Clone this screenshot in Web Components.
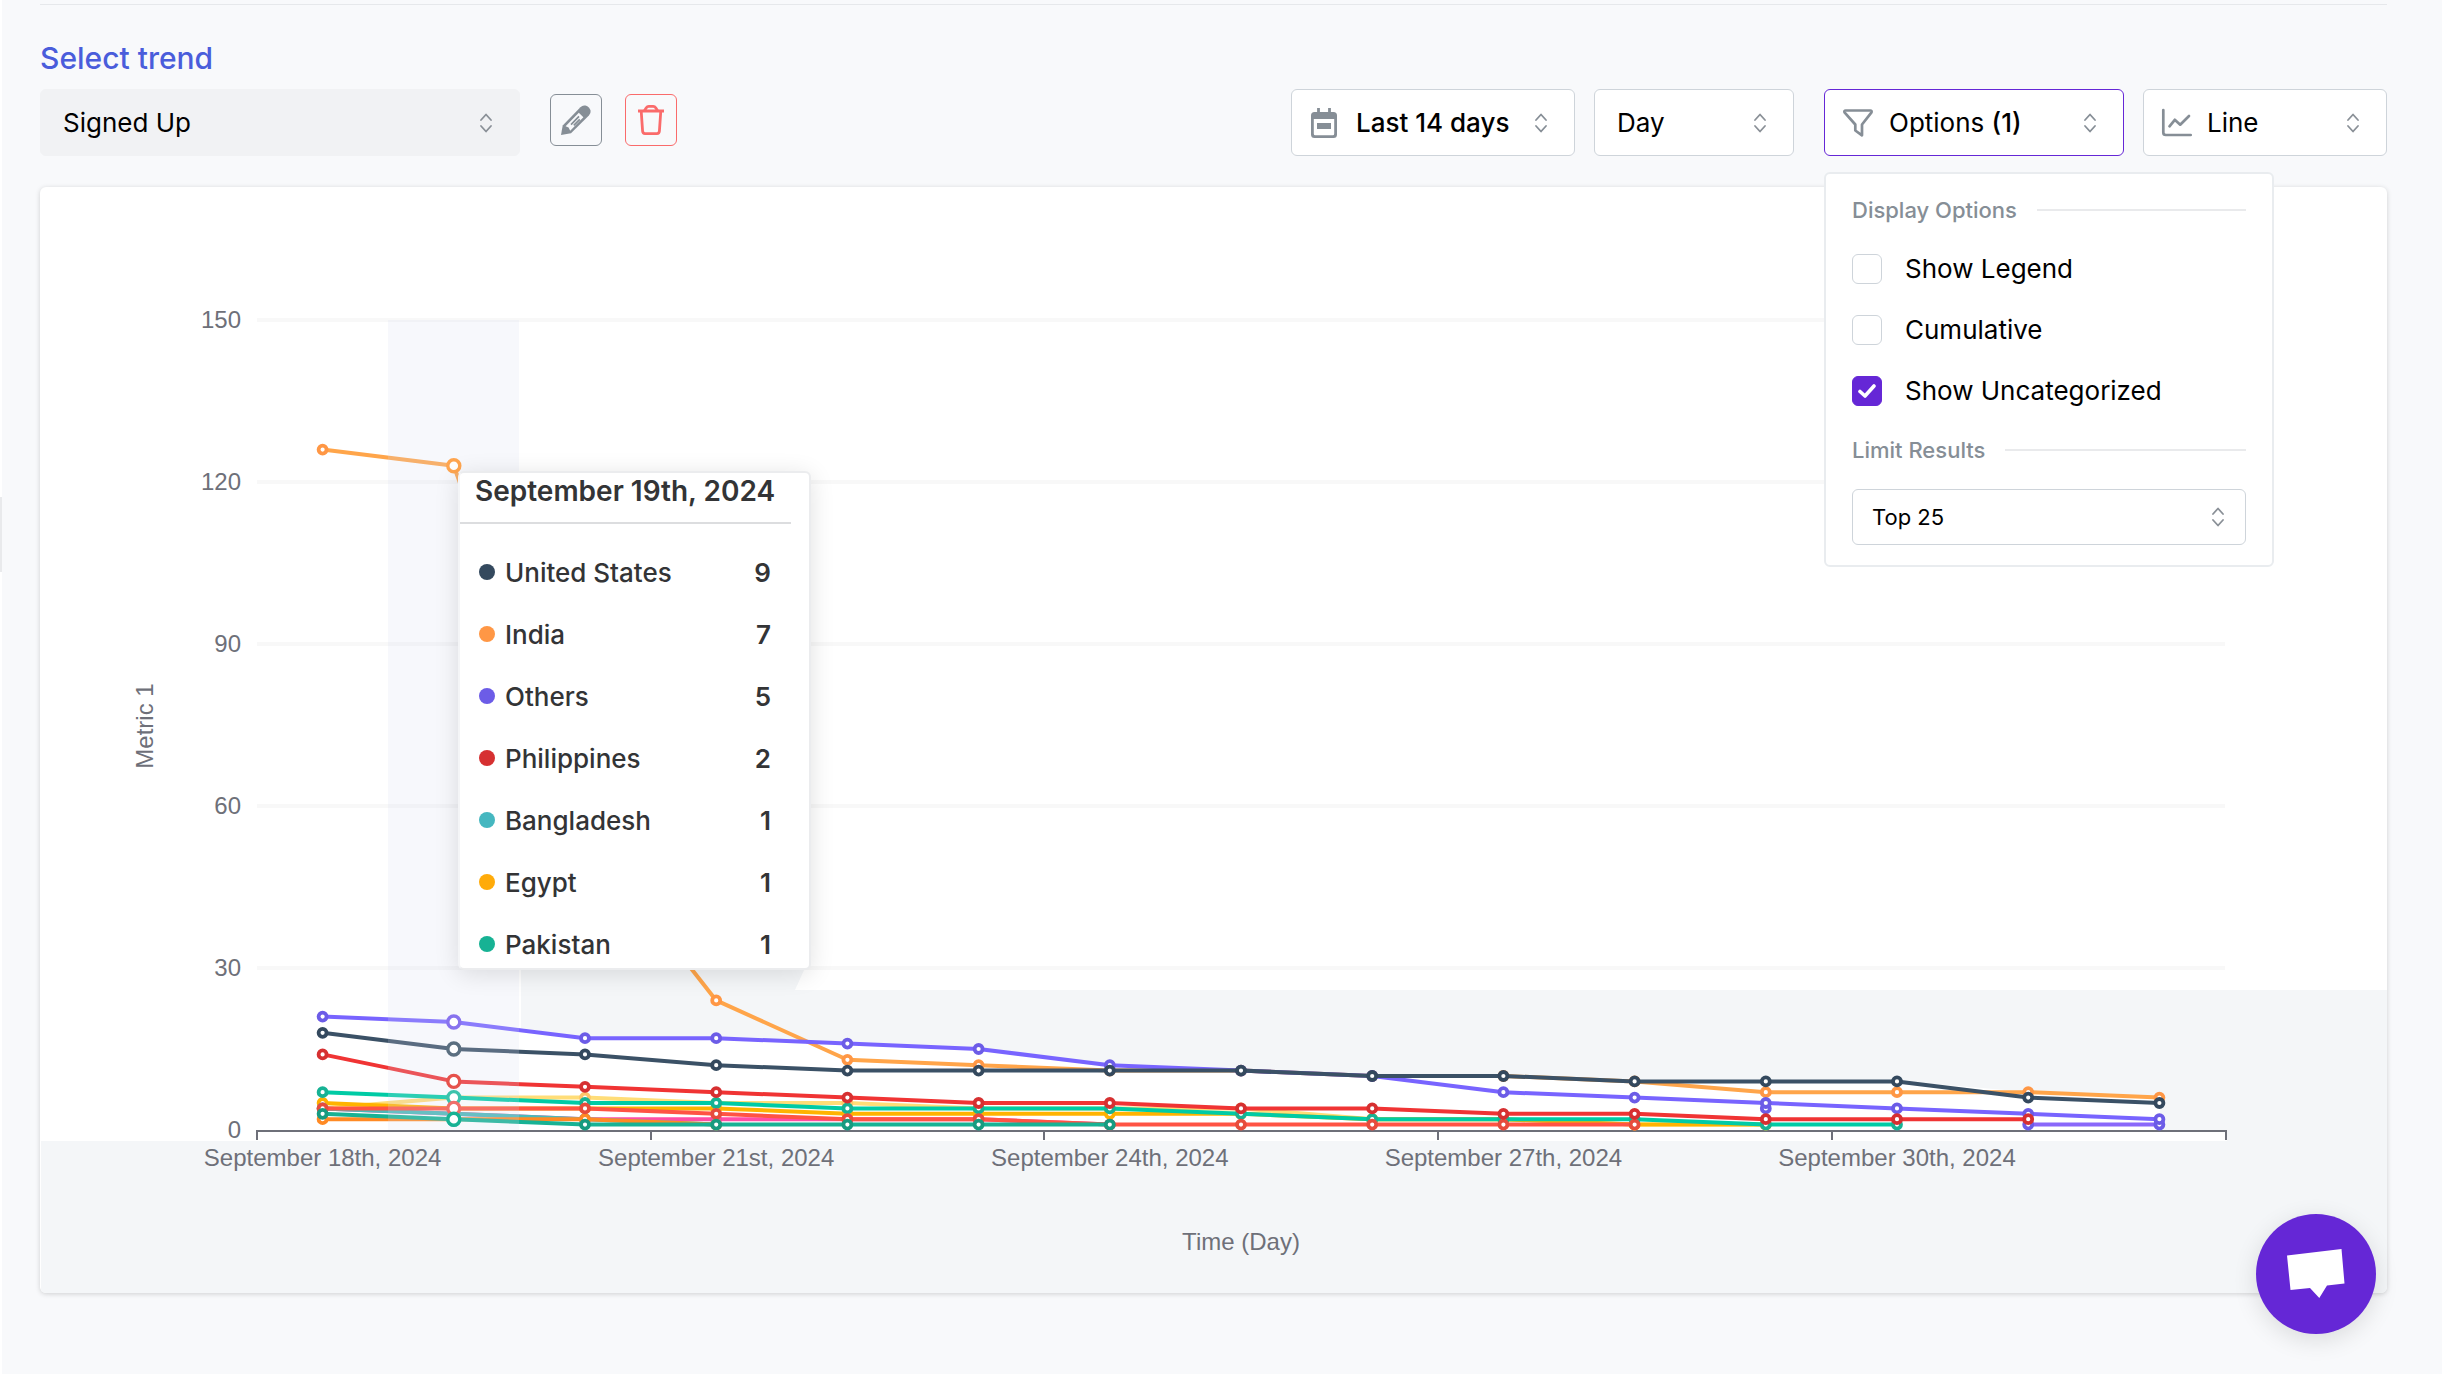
<!DOCTYPE html>
<html lang="en">
<head>
<meta charset="utf-8">
<title>Trends</title>
<style>
html{background:#f8f9fb}
body{margin:0;font-family:Inter,sans-serif;font-size:26px;color:#000}
</style>
</head>
<body>
<trend-page></trend-page>
<script>
const BASE='<style>*{box-sizing:border-box}:host{box-sizing:border-box}button,select,input{font:inherit;color:inherit;margin:0}</style>';
const define=(name,html)=>customElements.define(name,class extends HTMLElement{
  connectedCallback(){
    if(this.shadowRoot)return;
    const t=document.createElement('template');
    t.innerHTML=BASE+(typeof html==='function'?html(this):html);
    this.attachShadow({mode:'open'}).append(t.content.cloneNode(true));
  }
});

const ICONS={
  chevrons:['0 0 12 20','<path d="M1 7l5-5.500 5 5.500M1 13l5 5.500 5-5.500" fill="none" stroke="currentColor" stroke-width="1.800" stroke-linecap="round" stroke-linejoin="round"/>'],
  pencil:['0 0 30 30','<path d="M0 30L1.700 20.400 19.400 2.200Q21.800-.2 24.500.6 28.600 1.900 29.600 5.800 30 8.200 27.900 10.400L10 28.200Z" fill="currentColor"/><path d="M4.600 21.200L17.800 7.700 22.400 12.300 9.200 25.700 7.600 22.600Z" fill="#f8f9fb"/><path d="M10 19.600L18 11.400M12.800 20.400L18.800 14.400" stroke="currentColor" stroke-width="1.700" fill="none"/>'],
  trash:['0 0 26 30','<path d="M0 6h26" stroke="currentColor" stroke-width="3"/><path d="M6.500 5.500L8.300 2.700Q9.200 1.400 10.700 1.400h4.600Q16.800 1.400 17.700 2.700L19.500 5.500M3.200 6L4.600 26.200Q4.800 28.600 7 28.600h12Q21.200 28.600 21.400 26.200L22.800 6" fill="none" stroke="currentColor" stroke-width="2.800"/>'],
  calendar:['0 0 26 30','<path d="M7.500 0v5M18.500 0v5" stroke="currentColor" stroke-width="2.800"/><path d="M3.500 4h19A3.500 3.500 0 0 1 26 7.500v19a3.500 3.500 0 0 1-3.500 3.500h-19A3.500 3.500 0 0 1 0 26.500v-19A3.500 3.500 0 0 1 3.500 4z" fill="currentColor"/><path d="M2.800 11h20.400v14.700a1.500 1.500 0 0 1-1.500 1.500H4.300a1.500 1.500 0 0 1-1.500-1.500z" fill="#fff"/><path d="M6 15h14v6H6z" fill="currentColor"/>'],
  funnel:['0 0 30 28','<path d="M1.500 3.300Q.9 1.500 2.700 1.500H27.300Q29.100 1.500 28.500 3.300L19 15.500V26.300L12.300 21.500V15.500Z" fill="none" stroke="currentColor" stroke-width="2.700" stroke-linejoin="round"/>'],
  line:['0 0 30 28','<path d="M1.300 1V23.500Q1.300 26 3.800 26H28.700M7.500 17.300L12.800 10.800 18.200 15.700 27 7" fill="none" stroke="currentColor" stroke-width="2.700" stroke-linecap="round" stroke-linejoin="round"/>'],
  chat:['0 0 58 50','<path d="M0 6.500L54.500 0 57.500 34.500 40 36.500 32.300 49 23 39 3.500 41Z" fill="currentColor"/>']
};
define('ui-icon',el=>{
  const [box,shape]=ICONS[el.getAttribute('name')], [,,w,h]=box.split(' ');
  return `<style>:host{display:block;flex:none;pointer-events:none}svg{display:block;overflow:visible}</style><svg width="${w}" height="${h}" viewBox="${box}" aria-hidden="true">${shape}</svg>`;
});

define('ui-select',el=>`<style>
:host{display:grid;grid-template-columns:1fr;align-items:center;height:var(--h,67px);color:#000}
select,.lead,.chev{grid-area:1/1}
select{appearance:none;width:100%;height:100%;border:1px solid #ced4da;border-radius:6px;background:#fff;padding:0 48px 0 var(--pad,22px);outline:0}
:host([filled]) select{border-color:#f1f2f4;background:#f1f2f4}
.chev{justify-self:end;margin-right:var(--end,28px);color:#8a9097}
.lead{justify-self:start;margin-left:19px;color:#868e96;pointer-events:none}
</style><select id="s" aria-label="${el.getAttribute('label')}"><option>${el.getAttribute('value')}</option></select>
<div class="lead"><slot></slot></div><ui-icon class="chev" name="chevrons"></ui-icon>`);

define('ui-picker',`<style>
:host{display:block;position:relative}
button{display:flex;align-items:center;width:100%;height:67px;padding:0 27px 0 19px;border:1px solid #ced4da;border-radius:6px;background:#fff;text-align:left;font-weight:500;gap:19px}
:host([open]) button{border-color:#6527d6;font-weight:400;gap:16px;padding-left:18px}
span{flex:1}
ui-icon,::slotted(ui-icon){color:#868e96}
</style><button type="button"><slot name="icon"></slot><span><slot></slot></span><ui-icon name="chevrons"></ui-icon></button><slot name="panel"></slot>`);

define('ui-check',el=>`<style>
:host{display:block}
label{display:flex;align-items:center;gap:23px;height:30px;line-height:30px}
.box{display:grid;flex:none;width:30px;height:30px}
input,svg{grid-area:1/1}
input{appearance:none;width:30px;height:30px;border:1px solid #ced4da;border-radius:6px;background:#fff}
input:checked{background:#6527d6;border-color:#6527d6}
svg{place-self:center;display:none;pointer-events:none}
input:checked+svg{display:block}
</style><label><span class="box"><input type="checkbox"${el.hasAttribute('checked')?' checked':''}><svg width="18" height="14" viewBox="0 0 18 14"><path d="M2 7.500L7 12 16 2" fill="none" stroke="#fff" stroke-width="3.600" stroke-linecap="round" stroke-linejoin="round"/></svg></span><slot></slot></label>`);

define('ui-divider',`<style>
:host{display:flex;align-items:center;gap:20px;height:28px;line-height:28px;font-size:22px;font-weight:500;color:#868e96}
:host::after{content:"";flex:1;height:2px;background:#e9eaec}
</style><slot></slot>`);

define('options-panel',`<style>
:host{position:absolute;z-index:3;top:83px;left:0;width:450px;display:flex;flex-direction:column;gap:30px;padding:22px 26px 20px;background:#fff;border:2px solid #e9ecef;border-radius:6px}
.checks{display:flex;flex-direction:column;gap:31px}
.limit{display:flex;flex-direction:column;gap:25px}
ui-select{--h:56px;--pad:19px;--end:22px;font-size:22px}
</style><ui-divider>Display Options</ui-divider>
<div class="checks"><ui-check>Show Legend</ui-check><ui-check>Cumulative</ui-check><ui-check checked>Show Uncategorized</ui-check></div>
<div class="limit"><ui-divider>Limit Results</ui-divider><ui-select label="Limit results" value="Top 25"></ui-select></div>`);

const SERIES=[
  {line:'#ffdd78',dot:'#ffc66b',v:[4,6,6,5,5,4,4,4,2,2,1,1]},
  {line:'#ffb300',dot:'#ffb000',v:[5,4,4,4,3,3,3,3,2,2,1,1]},
  {line:'#ff4da6',dot:'#f4509c',v:[4,3,2,2,2,2,1]},
  {line:'#00cba5',dot:'#17b294',v:[7,6,5,5,4,4,4,3,2,2,2,1,1]},
  {line:'#4bb8b8',dot:'#45b7c0',v:[4,3,2,1]},
  {line:'#ff8a24',dot:'#ff8a24',v:[2,2,2,1]},
  {line:'#ff5344',dot:'#e74c3c',v:[4,4,4,3,2,2,1,1,1,1,1]},
  {line:'#17b294',dot:'#179b80',v:[3,2,1,1,1,1,1]},
  {line:'#ffa54a',dot:'#ff9745',v:[126,123,55,24,13,12,11,11,10,10,9,7,7,7,6]},
  {line:'#8a68fa',dot:'#6c5ce7',v:[,,,,,,,,,,,4,,1,1]},
  {line:'#7864ff',dot:'#6c5ce7',v:[21,20,17,17,16,15,12,11,10,7,6,5,4,3,2]},
  {line:'#f03434',dot:'#d63031',v:[14,9,8,7,6,5,5,4,4,3,3,2,2,2]},
  {line:'#3b5166',dot:'#34495e',v:[18,15,14,12,11,11,11,11,10,10,9,9,9,6,5]}
];
const HOVER=[[2,'#4bb8b8'],[6,'#3dc3ac'],[4,'#f0706a'],[2,'#17b294'],[123,'#ffa54f'],[20,'#8873ee'],[9,'#e6524c'],[15,'#5b6f80']];
const X=i=>(322.6+i*131.2).toFixed(1), Y=v=>(1130-v*5.4).toFixed(1);
function chart(){
  let s='';
  for(const v of [30,60,90,120,150]) s+=`<path d="M257 ${Y(v)}H2225" stroke="#f8f8f8" stroke-width="4"/>`;
  for(const v of [0,30,60,90,120,150]) s+=`<text x="241" y="${+Y(v)+8}" text-anchor="end">${v}</text>`;
  s+='<path d="M257 1140V1131H2226V1140M651 1131V1140M1044 1131V1140M1438 1131V1140M1832 1131V1140" fill="none" stroke="#6e7079" stroke-width="2"/>';
  ['18th','21st','24th','27th','30th'].forEach((d,i)=>{s+=`<text x="${X(i*3)}" y="1166" text-anchor="middle">September ${d}, 2024</text>`});
  s+='<text x="1241" y="1250" text-anchor="middle">Time (Day)</text><text transform="translate(153 726) rotate(-90)" text-anchor="middle">Metric 1</text>';
  for(const {line,dot,v} of SERIES){
    let d='',c='',on=false;
    for(let i=0;i<v.length;i++){
      if(v[i]===undefined){on=false;continue}
      d+=(on?'L':'M')+X(i)+' '+Y(v[i]);on=true;
      if(i!==1)c+=`<circle cx="${X(i)}" cy="${Y(v[i])}" r="4"/>`;
    }
    s+=`<path d="${d}" fill="none" stroke="${line}" stroke-width="4" stroke-linejoin="round"/><g fill="#fff" stroke="${dot}" stroke-width="3.800">${c}</g>`;
  }
  s+='<path d="M388 320H519V1130H388Z" fill="rgba(215,220,242,.2)"/>';
  for(const [v,c] of HOVER) s+=`<circle cx="${X(1)}" cy="${Y(v)}" r="6" fill="#fff" stroke="${c}" stroke-width="3.400"/>`;
  return s;
}
define('trend-chart',()=>`<style>
:host{display:block}
svg{display:block;width:100%;height:auto}
text{font:24px "Liberation Sans",Arial,sans-serif;fill:#6e7079}
</style><svg viewBox="40 187 2347 1106" role="img" aria-label="Signed Up trend by country">
<path d="M521 968H805L795 990H2387V1293H41V1141H2227V1130H2160V1098L2029 1092 1898 1081H1635L1504 1076H1373L1241 1071 1110 1065 979 1049 848 1044 716 1038H585L521 1028Z" fill="#f4f6f8"/>
${chart()}</svg>`);

define('tooltip-row',el=>`<style>
:host{display:flex;align-items:center;gap:10px;height:62px;padding:0 38px 0 19px;font-weight:500}
i{width:16px;height:16px;border-radius:50%;background:${el.getAttribute('color')}}
span{flex:1}b{font-weight:600}
</style><i></i><span><slot></slot></span><b>${el.getAttribute('count')}</b>`);
define('chart-tooltip',`<style>
:host{position:absolute;z-index:2;display:block;width:353px;height:499px;overflow:hidden;background:#fff;border:2px solid #ebecee;border-left-color:#f4f5f7;border-radius:6px;box-shadow:0 4px 24px rgba(0,0,0,.12);color:#333436}
h2{margin:0 18px 17px 0;padding:0 0 13px 15px;border-bottom:2px solid #dcdddf;font-size:28px;line-height:36px;font-weight:600;white-space:nowrap}
</style><h2>September 19th, 2024</h2>
<tooltip-row color="#34495e" count="9">United States</tooltip-row>
<tooltip-row color="#ff9745" count="7">India</tooltip-row>
<tooltip-row color="#6c5ce7" count="5">Others</tooltip-row>
<tooltip-row color="#d63031" count="2">Philippines</tooltip-row>
<tooltip-row color="#45b7c0" count="1">Bangladesh</tooltip-row>
<tooltip-row color="#ffab0a" count="1">Egypt</tooltip-row>
<tooltip-row color="#17b294" count="1">Pakistan</tooltip-row>`);

define('chart-card',`<style>
:host{display:block;position:relative;background:#fff;border-radius:6px;box-shadow:0 1px 5px rgba(0,0,0,.17)}
.clip{border-radius:6px;overflow:hidden}
chart-tooltip{left:418px;top:284px}
</style><div class="clip"><trend-chart></trend-chart></div><chart-tooltip></chart-tooltip>`);

define('icon-button',el=>`<style>
:host{display:block}
button{display:grid;place-items:center;width:52px;height:52px;padding:0;border:1px solid currentColor;border-radius:6px;background:none;color:inherit}
</style><button type="button" aria-label="${el.getAttribute('label')}"><slot></slot></button>`);

define('trend-toolbar',`<style>
:host{display:flex;justify-content:space-between;align-items:flex-end}
.left{display:flex;flex-direction:column;gap:13px}
.title{font-size:30px;line-height:36px;font-weight:500;color:#4a5ddb}
.row{display:flex;align-items:flex-start}
.row ui-select{width:480px}
icon-button{margin-top:5px;color:#868e96}
.edit{margin-left:30px}.del{margin-left:23px;color:#fa6b6b}
.right{display:flex;gap:19px}
.range{width:284px}.day{width:200px}.opts{width:300px;margin-left:11px}.type{width:244px;--pad:63px}
b{font-weight:500}
</style><div class="left"><div class="title">Select trend</div><div class="row">
<ui-select filled label="Select trend" value="Signed Up"></ui-select>
<icon-button class="edit" label="Edit trend"><ui-icon name="pencil"></ui-icon></icon-button>
<icon-button class="del" label="Delete trend"><ui-icon name="trash"></ui-icon></icon-button></div></div>
<div class="right"><ui-picker class="range"><ui-icon slot="icon" name="calendar"></ui-icon>Last 14 days</ui-picker>
<ui-select class="day" label="Interval" value="Day"></ui-select>
<ui-picker class="opts" open><ui-icon slot="icon" name="funnel"></ui-icon>Options <b>(1)</b><options-panel slot="panel"></options-panel></ui-picker>
<ui-select class="type" label="Chart type" value="Line"><ui-icon name="line"></ui-icon></ui-select></div>`);

define('chat-launcher',`<style>
:host{position:fixed;z-index:5;right:66px;bottom:40px}
button{display:grid;place-items:center;width:120px;height:120px;padding:0;border:0;border-radius:50%;background:#6527d6;color:#fff;box-shadow:0 6px 24px rgba(0,0,0,.12)}
</style><button type="button" aria-label="Open chat"><ui-icon name="chat"></ui-icon></button>`);

define('trend-page',`<style>
:host{display:flex;flex-direction:column;min-height:100vh;padding:4px 55px 40px 38px;border-left:2px solid #fff}
hr{width:100%;height:1px;margin:0 0 35px;border:0;background:#e6e8eb}
chart-card{margin-top:31px}
.handle{position:absolute;left:0;top:497px;width:2px;height:75px;background:#e9eaec}
</style><div class="handle"></div><hr><trend-toolbar></trend-toolbar><chart-card></chart-card><chat-launcher></chat-launcher>`);
</script>
</body>
</html>
